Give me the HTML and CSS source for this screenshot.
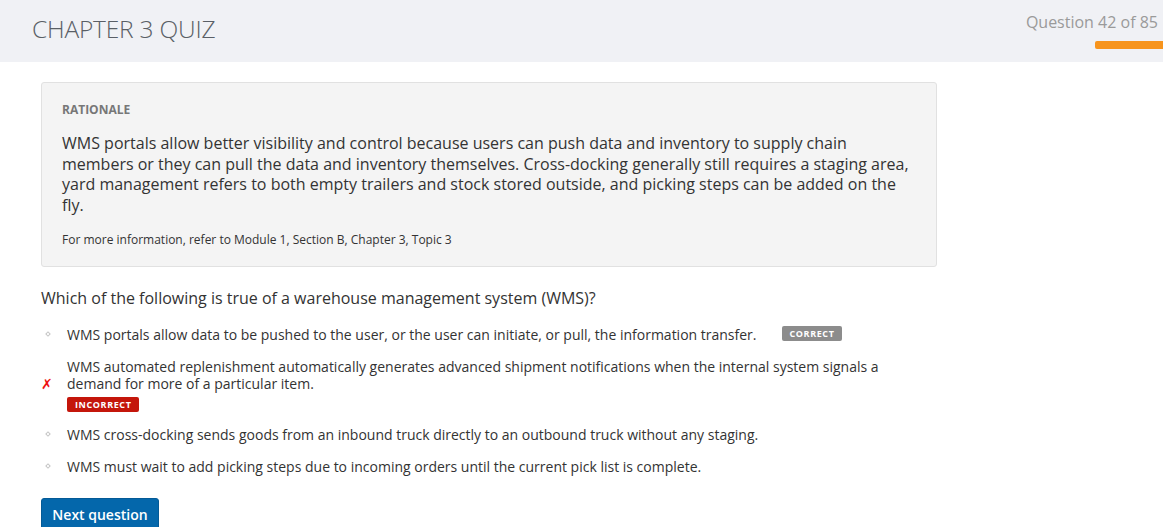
FILE: index.html
```html
<!DOCTYPE html>
<html>
<head>
<meta charset="utf-8">
<link rel="stylesheet" href="styles.css">
</head>
<body>
<header class="header">
  <h1 class="title">CHAPTER 3 QUIZ</h1>
  <div class="progress">
    <div class="progress-label">Question 42 of 85</div>
    <div class="progress-bar"></div>
  </div>
</header>
<main class="main">
  <section class="rationale">
    <div class="rationale-label">RATIONALE</div>
    <p class="rationale-text">WMS portals allow better visibility and control because users can push data and inventory to supply chain members or they can pull the data and inventory themselves. Cross-docking generally still requires a staging area, yard management refers to both empty trailers and stock stored outside, and picking steps can be added on the fly.</p>
    <p class="rationale-note">For more information, refer to Module 1, Section B, Chapter 3, Topic 3</p>
  </section>
  <p class="question">Which of the following is true of a warehouse management system (WMS)?</p>
  <ul class="options">
    <li class="option">
      <span class="marker"><span class="diamond"></span></span>
      <div class="option-body">WMS portals allow data to be pushed to the user, or the user can initiate, or pull, the information transfer.<span class="badge badge-correct">CORRECT</span></div>
    </li>
    <li class="option option-wrong">
      <span class="marker"><span class="cross">✗</span></span>
      <div class="option-body">WMS automated replenishment automatically generates advanced shipment notifications when the internal system signals a demand for more of a particular item.<div><span class="badge badge-incorrect">INCORRECT</span></div></div>
    </li>
    <li class="option">
      <span class="marker"><span class="diamond"></span></span>
      <div class="option-body">WMS cross-docking sends goods from an inbound truck directly to an outbound truck without any staging.</div>
    </li>
    <li class="option">
      <span class="marker"><span class="diamond"></span></span>
      <div class="option-body">WMS must wait to add picking steps due to incoming orders until the current pick list is complete.</div>
    </li>
  </ul>
  <button class="next">Next question</button>
</main>
</body>
</html>
```
FILE: styles.css
```css
html, body {
  margin: 0;
  padding: 0;
  background: #ffffff;
  font-family: "Open Sans", "Liberation Sans", sans-serif;
  color: #333333;
}
.header {
  height: 62px;
  background: #f0f1f5;
  display: flex;
  justify-content: space-between;
  align-items: flex-start;
}
.title {
  margin: 13px 0 0 32px;
  font-size: 24.5px;
  font-weight: 300;
  color: #5a5f66;
  line-height: 32px;
  letter-spacing: -0.2px;
}
.progress {
  display: flex;
  flex-direction: column;
  align-items: flex-end;
  padding-top: 11px;
}
.progress-label {
  font-size: 16px;
  line-height: 22px;
  color: #9a9a9a;
  margin-right: 5px;
}
.progress-bar {
  margin-top: 8px;
  width: 68px;
  height: 8px;
  background: #f7941d;
  border-radius: 2px 0 0 2px;
}
.main {
  padding: 20px 0 0 41px;
}
.rationale {
  width: 854px;
  background: #f4f4f4;
  border: 1px solid #e1e1e1;
  border-radius: 3px;
  padding: 18px 20px 18px 20px;
}
.rationale-label {
  font-size: 12px;
  font-weight: 700;
  color: #777777;
  line-height: 16px;
  margin-top: 1px;
}
.rationale-text {
  margin: 15px 0 0 0;
  font-size: 16px;
  line-height: 20.7px;
  color: #333333;
}
.rationale-note {
  margin: 16px 0 0 0;
  font-size: 12px;
  line-height: 16px;
  color: #333333;
}
.question {
  margin: 20px 0 0 0;
  font-size: 16px;
  line-height: 22px;
  color: #333333;
}
.options {
  list-style: none;
  margin: 17px 0 0 0;
  padding: 0;
  width: 850px;
}
.option {
  display: flex;
  align-items: center;
  margin-bottom: 15px;
  font-size: 14px;
  line-height: 17px;
}
.marker {
  width: 26px;
  flex: none;
  display: flex;
  justify-content: flex-start;
  align-items: center;
}
.diamond {
  width: 2px;
  height: 2px;
  margin-left: 5px;
  border: 1px solid #c4c4c4;
  transform: rotate(45deg);
}
.cross {
  color: #ee1111;
  font-family: "DejaVu Sans", sans-serif;
  font-size: 14px;
  font-style: italic;
  font-weight: 700;
  margin-left: 0;
}
.option-body {
  flex: 1;
  max-width: 824px;
}
.badge {
  display: inline-block;
  font-size: 9px;
  font-weight: 700;
  letter-spacing: 0.6px;
  color: #ffffff;
  line-height: 15px;
  padding: 0 8px;
  border-radius: 2px;
}
.badge-correct {
  background: #8c8c8c;
  margin-left: 25px;
  vertical-align: 3px;
}
.badge-incorrect {
  background: #c4160b;
  margin-top: 5px;
  vertical-align: 1px;
}
.option-wrong {
  margin-bottom: 14px;
}
.next {
  margin-top: 8px;
  box-sizing: border-box;
  width: 118px;
  font-family: "Open Sans", "Liberation Sans", sans-serif;
  font-size: 14px;
  font-weight: 600;
  color: #ffffff;
  background: #0467ab;
  border: 1px solid #045a96;
  border-radius: 3px;
  padding: 6px 0 8px 0;
  text-align: center;
  line-height: 20px;
  white-space: nowrap;
}
```
